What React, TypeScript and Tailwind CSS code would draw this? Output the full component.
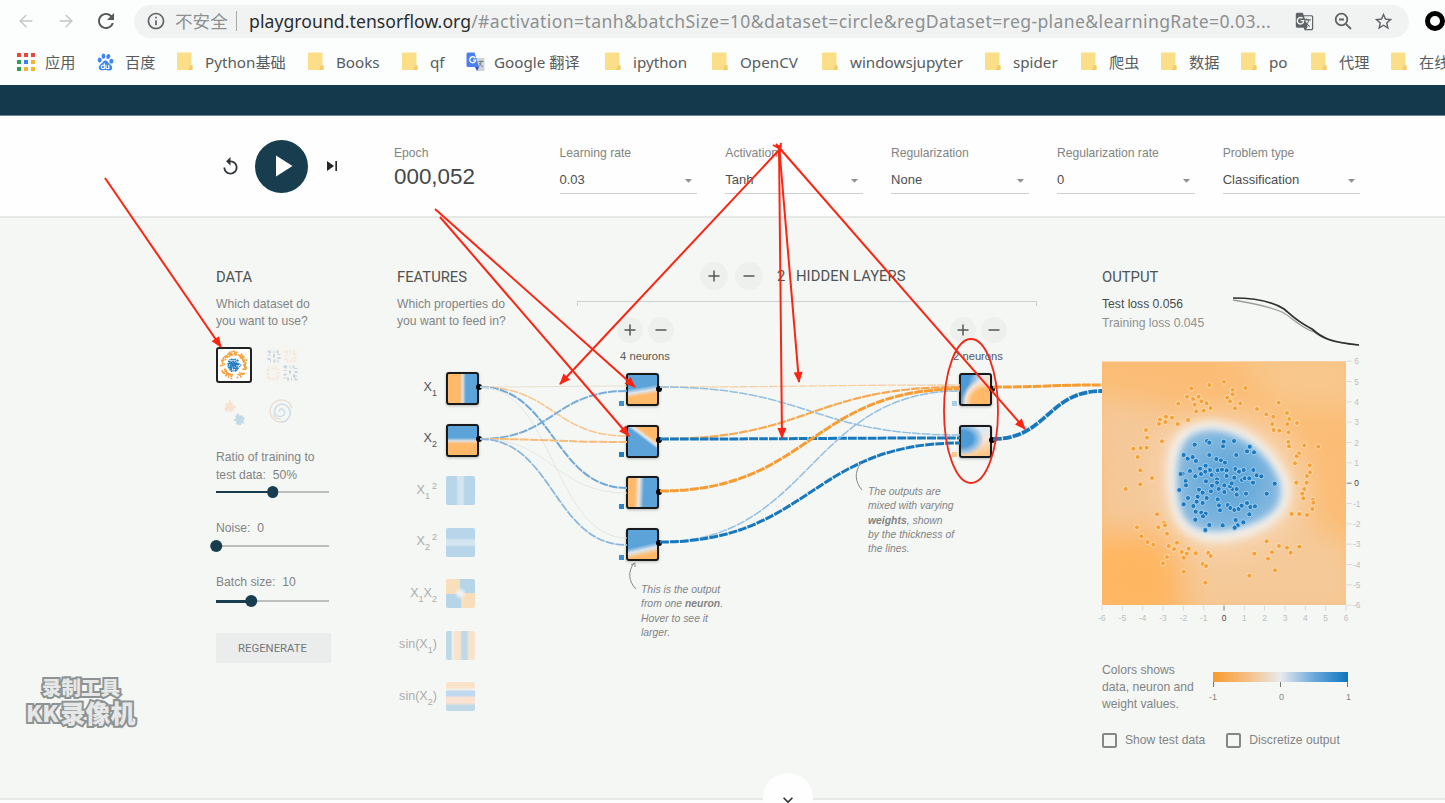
import { ArrowLeft, ArrowRight } from 'lucide-react';
import {
  MdArrowDropDown, MdGTranslate, MdInfoOutline, MdPlayArrow, MdRefresh,
  MdReplay, MdSkipNext, MdStarBorder, MdKeyboardArrowDown,
} from 'react-icons/md';
import { SiBaidu } from 'react-icons/si';

const bookmarks = [
  { label: '应用', icon: 'apps', width: 'w-[80px]' },
  { label: '百度', icon: 'baidu', width: 'w-[80px]' },
  { label: 'Python基础', icon: 'folder', width: 'w-[131px]' },
  { label: 'Books', icon: 'folder', width: 'w-[94px]' },
  { label: 'qf', icon: 'folder', width: 'w-[64px]' },
  { label: 'Google 翻译', icon: 'google', width: 'w-[139px]' },
  { label: 'ipython', icon: 'folder', width: 'w-[107px]' },
  { label: 'OpenCV', icon: 'folder', width: 'w-[110px]' },
  { label: 'windowsjupyter', icon: 'folder', width: 'w-[163px]' },
  { label: 'spider', icon: 'folder', width: 'w-[96px]' },
  { label: '爬虫', icon: 'folder', width: 'w-[80px]' },
  { label: '数据', icon: 'folder', width: 'w-[80px]' },
  { label: 'po', icon: 'folder', width: 'w-[70px]' },
  { label: '代理', icon: 'folder', width: 'w-[80px]' },
  { label: '在线', icon: 'folder', width: 'w-[80px]' },
];

const selects = [
  { label: 'Learning rate', value: '0.03' },
  { label: 'Activation', value: 'Tanh' },
  { label: 'Regularization', value: 'None' },
  { label: 'Regularization rate', value: '0' },
  { label: 'Problem type', value: 'Classification' },
];

const layerOne = [
  'bg-[linear-gradient(171deg,#ffb968_34%,#dfe6ec_46%,#5ba3d9_58%)]',
  'bg-[linear-gradient(37deg,#5ba3d9_55%,#e8e8e8_62%,#ffb968_69%)]',
  'bg-[linear-gradient(92deg,#ffb968_26%,#ece8e4_40%,#5ba3d9_54%)]',
  'bg-[linear-gradient(167deg,#5ba3d9_52%,#dfe6ec_64%,#ffb968_78%)]',
];
layerOne[0] = 'bg-[linear-gradient(171deg,#5ba3d9_43%,#dfe6ec_55%,#ffb968_66%)]';

const layerTwo = [
  'bg-[radial-gradient(ellipse_75%_75%_at_80%_90%,#ffb968_55%,#f6e3d3_80%,transparent_100%),linear-gradient(105deg,#4d9bd6_28%,#dfe7ee_55%,#f6e0cc_75%)]',
  'bg-[radial-gradient(ellipse_62%_48%_at_10%_42%,#4d9bd6_50%,#9cc3e4_80%,transparent_105%),linear-gradient(160deg,#dfe8ee_35%,#f3e6da_52%,#fcc486_85%)]',
];

const ORANGE = '#f79c33';
const BLUE = '#1878bd';

// from x,y -> to x,y
const links = [
  { a: [480, 387], b: [627, 386], color: '#e9dfcf', w: 1 },
  { a: [480, 387], b: [627, 436], color: '#f7c58d', w: 1.6 },
  { a: [480, 387], b: [627, 488], color: '#6fa9d8', w: 2 },
  { a: [480, 387], b: [627, 538], color: '#e5e6e3', w: 1 },
  { a: [480, 439], b: [627, 391], color: '#78add8', w: 2 },
  { a: [480, 439], b: [627, 442], color: '#f8bb78', w: 2 },
  { a: [480, 439], b: [627, 493], color: '#e5e7e4', w: 1 },
  { a: [480, 439], b: [627, 545], color: '#8bb8dc', w: 1.8 },
  { a: [660, 387], b: [960, 385], color: '#f6cfa2', w: 1.3 },
  { a: [660, 387], b: [960, 435], color: '#93bfe0', w: 1.5 },
  { a: [660, 439], b: [960, 387], color: '#f7a952', w: 2.2 },
  { a: [660, 439], b: [960, 438], color: BLUE, w: 3 },
  { a: [660, 491], b: [960, 389], color: ORANGE, w: 3 },
  { a: [660, 542], b: [960, 391], color: '#93bfe0', w: 1.5 },
  { a: [660, 542], b: [960, 443], color: BLUE, w: 3 },
  { a: [993, 387], b: [1102, 385], color: ORANGE, w: 3 },
  { a: [993, 439], b: [1102, 391], color: BLUE, w: 3.8 },
];

const arrows = [
  [105, 178, 221, 347],
  [435, 209, 635, 387],
  [440, 217, 629, 436],
  [780, 149, 560, 384],
  [779, 145, 782, 438],
  [779, 145, 799, 382],
  [776, 144, 1025, 429],
];

const orangeDots = [
  [402, 395], [358, 405], [304, 415], [428, 420], [466, 414], [428, 433], [291, 440], [309, 447], [326, 440], [334, 454],
  [350, 460], [314, 464], [265, 461], [412, 443], [420, 454], [451, 460], [435, 475], [362, 474], [319, 484], [341, 482],
  [501, 477], [566, 458], [529, 493], [550, 500], [591, 489], [598, 507], [547, 522], [592, 522], [621, 519], [551, 540],
  [568, 542], [596, 547], [595, 576], [597, 589], [643, 586], [685, 590], [627, 610], [620, 619], [615, 640], [659, 646],
  [660, 667], [651, 678], [650, 698], [619, 698], [643, 717], [637, 731], [640, 745], [669, 749], [670, 758], [667, 777],
  [651, 795], [628, 792], [605, 792], [294, 510], [246, 503], [228, 500], [210, 509], [226, 516], [207, 522], [263, 522],
  [168, 540], [171, 563], [216, 574], [130, 596], [152, 594], [170, 593], [143, 621], [151, 661], [186, 684], [151, 703],
  [107, 717], [201, 793], [141, 832], [205, 832], [222, 818], [225, 826], [231, 851], [154, 859], [173, 876], [190, 884],
  [236, 888], [261, 878], [252, 897], [275, 906], [296, 896], [290, 911], [281, 923], [317, 910], [231, 921], [219, 940],
  [281, 965], [355, 909], [362, 918], [338, 942], [348, 948], [346, 998], [493, 911], [530, 874], [567, 888], [591, 893],
  [602, 908], [628, 890], [546, 907], [534, 926], [555, 961], [478, 977],
];

const blueDots = [
  [314, 584], [351, 573], [358, 578], [401, 575], [399, 589], [432, 573], [479, 590], [471, 604], [492, 607], [439, 615],
  [281, 615], [293, 626], [308, 621], [318, 633], [358, 615], [379, 627], [393, 631], [405, 638], [347, 647], [330, 656],
  [300, 663], [278, 671], [272, 672], [287, 693], [288, 706], [268, 720], [316, 679], [333, 672], [346, 665], [360, 660],
  [365, 675], [383, 661], [396, 659], [410, 661], [410, 678], [436, 657], [448, 662], [461, 660], [490, 660], [433, 683],
  [456, 690], [464, 685], [478, 685], [500, 676], [514, 679], [489, 698], [554, 701], [530, 731], [468, 731], [440, 734],
  [427, 717], [440, 717], [420, 709], [403, 706], [381, 688], [381, 698], [366, 707], [348, 694], [327, 719], [338, 728],
  [363, 724], [386, 717], [403, 726], [323, 740], [350, 744], [383, 748], [294, 744], [281, 763], [310, 768], [320, 755],
  [338, 759], [387, 766], [390, 781], [413, 765], [421, 774], [433, 780], [446, 777], [455, 767], [471, 759], [481, 771],
  [495, 769], [478, 793], [317, 785], [334, 788], [347, 791], [339, 799], [316, 809], [358, 825], [346, 840], [398, 826],
  [437, 810], [460, 817], [443, 826], [434, 833], [447, 665], [425, 700],
];

function BookmarkIcon({ type }: { type: string }) {
  if (type === 'apps') {
    const colors = ['#e8453c', '#e8453c', '#e8453c', '#2e9e5b', '#3c7ff0', '#f5b32c', '#2e9e5b', '#f5b32c', '#f5b32c'];
    return (
      <div className="grid w-[18px] grid-cols-3 gap-[2.5px]">
        {colors.map((c, i) => <span key={i} className="h-[4.3px] w-[4.3px]" style={{ backgroundColor: c }} />)}
      </div>
    );
  }
  if (type === 'baidu') return <SiBaidu className="h-[18px] w-[17px] text-[#3b86f6]" />;
  if (type === 'google') {
    return (
      <svg width="20" height="20" viewBox="0 0 20 20">
        <path d="M8 6h10.500v13H11z" fill="#cfd3d8" />
        <path d="M0.500 2a1.500 1.500 0 0 1 1.500-1.500h6.500L13 15H2a1.500 1.500 0 0 1-1.500-1.500z" fill="#4a80ee" />
        <path d="M9 15h4l-2 4z" fill="#2b56c4" />
        <path d="M9.300 6.200a3 3 0 1 0 .4 2H7" fill="none" stroke="#fff" strokeWidth="1.300" />
        <path d="M12.500 9.500h5M15 8.500v1c0 2-1 4-2 5M13.500 11c1 2 2 3 3.500 4" fill="none" stroke="#777d85" />
      </svg>
    );
  }
  return (
    <svg width="16" height="19" viewBox="0 0 16 19">
      <path d="M0 1.500Q0 .5 1 .5h13.500v12.500h1v5H1q-1 0-1-1z" fill="#fbdf88" />
      <path d="M11 17.500c1-1 1.500-1.500 1.500-4h3v4.500H11z" fill="#f2cb6c" />
    </svg>
  );
}

function ZoomOutIcon() {
  return (
    <svg className="ml-[20px] shrink-0" width="19" height="19" viewBox="0 0 19 19" fill="none" stroke="#5f6265" strokeWidth="1.800">
      <circle cx="7.500" cy="7.500" r="5.800" />
      <path d="M11.800 11.800l5.200 5.200M5 7.500h5" />
    </svg>
  );
}

function Slider({ pct, thick = 'h-[2px]' }: { pct: number; thick?: string }) {
  return (
    <div className="relative flex h-4 w-[113px] items-center">
      <div className="h-[2px] w-full bg-[#bdbfbe]" />
      <div className={`absolute left-0 bg-[#183d4e] ${thick}`} style={{ width: `${pct}%` }} />
      <div className="absolute h-[11.5px] w-[11.5px] -translate-x-1/2 rounded-full bg-[#183d4e]" style={{ left: `${pct}%` }} />
    </div>
  );
}

function RoundButton({ sign, big = false }: { sign: string; big?: boolean }) {
  return (
    <button className={`flex items-center justify-center rounded-full bg-[#eef0ee] ${big ? 'h-7 w-7' : 'h-[26px] w-[26px]'}`}>
      <svg width="12" height="12" viewBox="0 0 12 12" stroke="#555758" strokeWidth="1.500">
        <path d={sign === '+' ? 'M0.500 6h11M6 .5v11' : 'M0.500 6h11'} />
      </svg>
    </button>
  );
}

function Node({ fill, bias }: { fill: string; bias?: string }) {
  return (
    <div className="relative flex h-[51.600px] items-center">
      <div className={`h-[33px] w-[33px] rounded-[3px] border-2 border-[#18191b] bg-origin-border shadow-[0_1px_3px_rgba(0,0,0,0.25)] ${fill}`} />
      <span className="absolute top-[21.500px] left-[30px] h-[6px] w-[6px] rounded-full bg-black" />
      {bias && <span className={`absolute bottom-[10px] -left-[7px] h-[5px] w-[5px] ${bias}`} />}
    </div>
  );
}

function Feature({ label, fill, active = false }: { label: React.ReactNode; fill: string; active?: boolean }) {
  return (
    <div className="flex h-[51.500px] items-center">
      <div className={`w-[40px] shrink-0 pb-[3px] text-right text-[12.600px] whitespace-nowrap ${active ? 'text-[#505253]' : 'text-[#abadac]'}`}>
        <span className="float-right">{label}</span>
      </div>
      <div className="ml-[9px]">
        {active
          ? <Node fill={fill} />
          : <div className={`mb-[2px] h-[29px] w-[29px] rounded-[2px] opacity-40 ${fill}`} />}
      </div>
    </div>
  );
}

const Sub = ({ children }: { children: React.ReactNode }) => <span className="relative top-[5px] text-[9px]">{children}</span>;
const Sup = ({ children }: { children: React.ReactNode }) => <span className="relative -top-[5px] ml-0.5 text-[9px]">{children}</span>;

function NeuronColumn({ count, fills, biases }: { count: number; fills: string[]; biases: string[] }) {
  return (
    <div className="flex w-[60px] flex-col items-center">
      <div className="flex gap-[5px]">
        <RoundButton sign="+" />
        <RoundButton sign="-" />
      </div>
      <p className="mt-[5px] h-4 text-[11.200px] leading-4 whitespace-nowrap text-[#555758]">{count} neurons</p>
      <div className="-ml-[5px]">
        {fills.map((f, i) => <Node key={i} fill={f} bias={biases[i]} />)}
      </div>
    </div>
  );
}

function Heatmap() {
  const ticks = [-6, -5, -4, -3, -2, -1, 0, 1, 2, 3, 4, 5, 6];
  return (
    <svg className="absolute top-[138px] left-[1090px]" width="276" height="270" viewBox="0 318 828 810">
      <defs>
        <clipPath id="plot"><rect x="36" y="334" width="732" height="731" /></clipPath>
        <filter id="soft" x="-30%" y="-30%" width="160%" height="160%"><feGaussianBlur stdDeviation="40" /></filter>
        <filter id="halo" x="-20%" y="-20%" width="140%" height="140%"><feGaussianBlur stdDeviation="14" /></filter>
        <filter id="edge" x="-20%" y="-20%" width="140%" height="140%"><feGaussianBlur stdDeviation="11" /></filter>
        <radialGradient id="core">
          <stop offset="0.300" stopColor="#63a8d9" />
          <stop offset="1" stopColor="#86b9e0" />
        </radialGradient>
      </defs>
      <g clipPath="url(#plot)">
        <rect x="36" y="334" width="732" height="731" fill="#fbbd76" />
        <g filter="url(#soft)">
          <path d="M430 300H800V480L560 460z" fill="#f8c78c" />
          <path d="M0 430L250 480 230 830 20 840z" fill="#f5c898" />
          <path d="M290 860L600 780 800 900V1100H300z" fill="#f5c998" />
          <path d="M0 870H230L270 1100H0z" fill="#ffb661" />
          <path d="M200 560Q300 450 480 500T660 780Q500 960 330 920T200 560" fill="#f6d2ab" />
        </g>
        <path d="M232 640C238 540 300 512 370 512C470 520 560 590 598 690C620 780 560 830 470 862C370 895 280 875 250 800C232 740 228 700 232 640Z" fill="#f3f0ec" filter="url(#halo)" />
        <path d="M262 650C270 560 310 541 370 541C450 545 535 610 567 690C590 765 545 804 460 830C370 855 300 848 274 785C260 740 258 700 262 650Z" fill="url(#core)" filter="url(#edge)" />
        {orangeDots.map(([x, y], i) => <circle key={i} cx={x} cy={y} r="7.500" fill="#f5a136" stroke="#fde3c2" strokeWidth="2.500" />)}
        {blueDots.map(([x, y], i) => <circle key={i} cx={x} cy={y} r="7.500" fill="#1a79bf" stroke="#b3d7f0" strokeWidth="2.500" />)}
      </g>
      {ticks.map(t => {
        const x = 402 + t * 61;
        const y = 699.5 - t * 61;
        const color = t === 0 ? '#444' : '#bcbebd';
        return (
          <g key={t} fill={color} stroke="none" fontSize="25" fontFamily="Liberation Sans, sans-serif" textAnchor="middle">
            <path d={`M${x} 1067v15M770 ${y}h15`} stroke={t === 0 ? '#777' : '#d8dad9'} strokeWidth="3" />
            <text x={x} y="1112">{t}</text>
            <text x="800" y={y + 9}>{t}</text>
          </g>
        );
      })}
    </svg>
  );
}

function Arrow({ p }: { p: number[] }) {
  const [x1, y1, x2, y2] = p;
  const deg = (Math.atan2(y2 - y1, x2 - x1) * 180) / Math.PI;
  return (
    <g>
      <line x1={x1} y1={y1} x2={x2} y2={y2} stroke="#fb2512" strokeWidth="2" />
      <path d="M1 0L-10 4.500V-4.500Z" fill="#fb2512" transform={`translate(${x2} ${y2}) rotate(${deg})`} />
    </g>
  );
}

function Checkbox({ label }: { label: string }) {
  return (
    <label className="flex items-center gap-2">
      <span className="h-[15px] w-[15px] rounded-[2px] border-2 border-[#858787]" />
      {label}
    </label>
  );
}

export default function App() {
  return (
    <div className="relative h-[803px] w-[1445px] overflow-hidden bg-[#fcfdfc] font-['Liberation_Sans',Arial,sans-serif] text-[12.150px] text-[#828484]">
      <div className="bg-[#fcfefd] font-['Noto_Sans','Noto_Sans_CJK_SC',sans-serif]">
        <div className="flex h-[42px] items-center pl-[16px]">
          <ArrowLeft className="h-5 w-5 text-[#c4c6c6]" strokeWidth={1.6} />
          <ArrowRight className="ml-5 h-5 w-5 text-[#c4c6c6]" strokeWidth={1.6} />
          <MdRefresh className="ml-[18px] h-6 w-6 text-[#57595b]" />
          <div className="ml-[16px] flex h-[33px] w-[1275px] shrink-0 items-center rounded-full bg-[#f1f3f3] pl-[12px] text-[17.600px] text-[#8d9091]">
            <MdInfoOutline className="h-[20px] w-[20px] text-[#606366]" />
            <span className="ml-[9px] w-[53px] whitespace-nowrap">不安全</span>
            <span className="ml-[8px] h-5 w-px bg-[#a5a8a9]" />
            <span className="ml-[12px] w-[1036px] tracking-[0.380px] whitespace-nowrap">
              <span className="tracking-[0.060px] text-[#292c2e]">playground.tensorflow.org</span>/#activation=tanh&amp;batchSize=10&amp;dataset=circle&amp;regDataset=reg-plane&amp;learningRate=0.03...
            </span>
            <MdGTranslate className="ml-[10px] h-[19px] w-[19px] text-[#5f6265]" />
            <ZoomOutIcon />
            <MdStarBorder className="ml-[20px] h-[21px] w-[21px] text-[#5f6265]" />
          </div>
          <span className="ml-[16px] h-5 w-5 shrink-0 rounded-full border-[5px] border-black" />
        </div>
        <div className="flex h-[43px] items-center pl-[17px] text-[15.200px] text-[#585b5e]">
          {bookmarks.map((b, i) => (
            <div key={i} className={`flex shrink-0 items-center pb-[3px] ${b.width}`}>
              <span className="flex w-[28px] shrink-0 items-center"><BookmarkIcon type={b.icon} /></span>
              <span className="whitespace-nowrap">{b.label}</span>
            </div>
          ))}
        </div>
      </div>

      <header className="h-[31px] border-b border-[#6d8590] bg-[#15394c]" />

      <section className="relative flex h-[102px] border-b-2 border-[#e6e8e7] bg-[#fdfefd] pl-[220px]">
        <div className="flex h-full w-[174px] items-center">
          <MdReplay className="h-[21px] w-[21px] text-[#2f3335]" />
          <div className="ml-[14px] flex h-[53px] w-[53px] items-center justify-center rounded-full bg-[#183d4e]">
            <MdPlayArrow className="h-9 w-9 text-white" />
          </div>
          <MdSkipNext className="ml-[14px] h-[20px] w-[20px] text-[#222628]" />
        </div>
        <div className="w-[165.500px] pt-[29px]">
          <p className="h-4 leading-4">Epoch</p>
          <p className="text-[22.400px] leading-8 text-[#444748]">000,052</p>
        </div>
        <div className="flex gap-[28px] pt-[29px]">
          {selects.map(s => (
            <div key={s.label} className="w-[137.800px]">
              <p className="h-4 leading-4">{s.label}</p>
              <div className="mt-[5px] flex h-[28px] items-center justify-between border-b border-[#cfd1d0] text-[13px] text-[#4c4f50]">
                {s.value}
                <MdArrowDropDown className="mt-0.5 h-[17px] w-[17px] text-[#8f9191]" />
              </div>
            </div>
          ))}
        </div>
      </section>

      <main className="relative flex h-[582px] border-b-2 border-[#e8eae9] bg-[#f5f7f5] pl-[216px]">
        <div className="w-[115px] shrink-0 pt-[49px]">
          <h2 className="font-[Roboto] text-[14.800px] leading-5 text-[#505354]">DATA</h2>
          <p className="mt-[9px] leading-[17px]">Which dataset do<br />you want to use?</p>
          <div className="mt-[17px] grid grid-cols-[36px_36px] gap-x-3 gap-y-[10px]">
            <svg className="rounded-[3px] border-2 border-[#222] bg-white" width="36" height="36" viewBox="46 344 712 711">
              {orangeDots.map(([x, y], i) => <circle key={i} cx={x} cy={y} r="21" fill="#f5a13c" />)}
              {blueDots.map(([x, y], i) => <circle key={i} cx={x} cy={y} r="17" fill="#1a79bf" />)}
            </svg>
            <svg width="36" height="36" viewBox="0 0 36 36" className="opacity-35">
              <rect width="36" height="36" fill="#f5f2ef" />
              <path d="M5 5h10v9H5zM21 20h11v12H21z" fill="none" stroke="#7c9dc0" strokeWidth="3" strokeDasharray="2 2.500 1 2" />
              <path d="M9 9h3M25 25h3M29 29h2" stroke="#5d89b7" strokeWidth="3" strokeDasharray="2 1" />
              <path d="M4 21h10v11H4zM22 5h9v9h-9z" fill="none" stroke="#f7d2b4" strokeWidth="3" strokeDasharray="2 1.500" />
            </svg>
            <svg width="36" height="36" viewBox="0 0 36 36" className="opacity-45">
              <path d="M10 12l4-4 3 4 2 2-4 5-3-2-3 1z" fill="#f9c9a0" stroke="#f9c9a0" strokeWidth="2" strokeDasharray="2 2" />
              <path d="M21 21l4 2 3 1-1 6-5 2-3-5z" fill="#88b9d6" stroke="#88b9d6" strokeWidth="2" strokeDasharray="2 2" />
            </svg>
            <svg width="36" height="36" viewBox="0 0 36 36" className="opacity-35" fill="none" strokeWidth="1.500">
              <path d="M15 19a2.500 2.500 0 0 1 3-3a4 4 0 0 1 2 6a6 6 0 0 1-9-1a7.500 7.500 0 0 1 7-10a9 9 0 0 1 8 11a10 10 0 0 1-9 7" stroke="#8fa9cd" />
              <path d="M17 29a11 11 0 0 1-11-11a11.500 11.500 0 0 1 12-11a11 11 0 0 1 10 8M9 21a8 8 0 0 0 8 5" stroke="#d9b193" />
            </svg>
          </div>
          <p className="mt-[19px] leading-[18px]">Ratio of training to<br />test data:&nbsp; 50%</p>
          <Slider pct={50} />
          <p className="mt-[19px] leading-[18px]">Noise:&nbsp; 0</p>
          <div className="mt-px"><Slider pct={0} /></div>
          <p className="mt-[19px] leading-[18px]">Batch size:&nbsp; 10</p>
          <div className="mt-[2px]"><Slider pct={31} thick="h-[3px]" /></div>
          <button className="mt-6 h-[30px] w-[115px] bg-[#ebedec] pt-0.5 pr-0.5 font-[Roboto] text-[11.300px] text-[#737677]">REGENERATE</button>
        </div>

        <div className="ml-[66px] w-[115px] shrink-0 pt-[49px]">
          <h2 className="font-[Roboto] text-[14.800px] leading-5 text-[#505354]">FEATURES</h2>
          <p className="mt-[9px] leading-[17px] whitespace-nowrap">Which properties do<br />you want to feed in?</p>
          <div className="mt-[33px]">
            <Feature active label={<>X<Sub>1</Sub></>} fill="bg-[linear-gradient(90deg,#ffb968_42%,#dfe1e2_51%,#5ba3d9_60%)]" />
            <Feature active label={<>X<Sub>2</Sub></>} fill="bg-[linear-gradient(180deg,#5ba3d9_42%,#dfe1e2_51%,#ffb968_60%)]" />
            <Feature label={<>X<Sub>1</Sub><Sup>2</Sup></>} fill="bg-[linear-gradient(90deg,#5ba3d9_35%,#a5cbe8_42%,#a5cbe8_58%,#5ba3d9_65%)]" />
            <Feature label={<>X<Sub>2</Sub><Sup>2</Sup></>} fill="bg-[linear-gradient(180deg,#5ba3d9_35%,#a5cbe8_42%,#a5cbe8_58%,#5ba3d9_65%)]" />
            <Feature label={<>X<Sub>1</Sub>X<Sub>2</Sub></>} fill="bg-[radial-gradient(circle,#e8ecee_8%,transparent_30%),conic-gradient(#5ba3d9_25%,#ffb968_25%_50%,#5ba3d9_50%_75%,#ffb968_75%)]" />
            <Feature label={<>sin(X<Sub>1</Sub>)</>} fill="bg-[linear-gradient(90deg,#6dabd3_16%,#f0ebe4_24%,#ffc88c_30%_48%,#6dabd3_56%_70%,#ffc88c_80%)]" />
            <Feature label={<>sin(X<Sub>2</Sub>)</>} fill="bg-[linear-gradient(180deg,#ffc88c_20%,#f0ebe4_26%,#6dabe8_32%_46%,#ffc39a_54%_72%,#6dabd3_82%)]" />
          </div>
        </div>

        <div className="ml-[65px] w-[460px] shrink-0 pt-[44px]">
          <div className="flex h-7 items-center pl-[123px] font-[Roboto] text-[14.800px] text-[#505354]">
            <RoundButton big sign="+" />
            <span className="ml-[7px]"><RoundButton big sign="-" /></span>
            <span className="ml-[14px] w-[19px]">2</span>
            <h2 className="tracking-[0.050px] whitespace-nowrap">HIDDEN LAYERS</h2>
          </div>
          <div className="mt-[11px] h-[5px] border border-b-0 border-[#ced0cf]" />
          <div className="mt-[11px] flex justify-between pr-[29px] pl-[38px]">
            <NeuronColumn count={4} fills={layerOne} biases={['bg-[#3c8fd0]', 'bg-[#1f7cc4]', 'bg-[#2b84c9]', 'bg-[#3c8fd0]']} />
            <NeuronColumn count={2} fills={layerTwo} biases={['bg-[#a9cfe6]', 'bg-[#f3cb92]']} />
          </div>
        </div>

        <div className="ml-[65px] w-[270px] shrink-0 pt-[49px]">
          <h2 className="font-[Roboto] text-[14.800px] leading-5 text-[#505354]">OUTPUT</h2>
          <div className="flex h-[58px] justify-between pt-[8px] pr-[12px]">
            <div className="leading-[18.500px] text-[#909292]">
              <p className="text-[#484b4c]">Test loss 0.056</p>
              <p>Training loss 0.045</p>
            </div>
            <svg width="128" height="52" viewBox="0 0 128 52" fill="none">
              <path d="M1 5C20 8 38 12 50 17C60 22 66 31 82 37C94 46 105 48 127 50" stroke="#9a9c9b" strokeWidth="1.300" />
              <path d="M1 3C20 3 38 5 52 14C58 19 64 26 80 34C90 43 98 47 127 50" stroke="#2d2f30" strokeWidth="1.700" />
            </svg>
          </div>
          <div className="mt-[317px] flex">
            <p className="w-[110px] leading-[17px]">Colors shows<br />data, neuron and<br />weight values.</p>
            <div className="w-[138px] pt-[10px]">
              <div className="ml-px h-[10px] w-[135px] bg-[linear-gradient(90deg,#f79a2b,#f6be83_25%,#e8eaec_50%,#6aa9dc_75%,#0d74bd)]" />
              <div className="flex h-[5px] w-[137px] justify-between px-px">
                <span className="w-px bg-[#777]" /><span className="w-px bg-[#777]" /><span className="w-px bg-[#777]" />
              </div>
              <div className="-ml-[3px] flex w-[142px] justify-between text-[9px] leading-[20px]">
                <span>-1</span><span>0</span><span>1</span>
              </div>
            </div>
          </div>
          <div className="mt-[18px] flex gap-[21px] whitespace-nowrap">
            <Checkbox label="Show test data" />
            <Checkbox label="Discretize output" />
          </div>
        </div>

        <svg className="pointer-events-none absolute top-0 left-0" width="1445" height="580" viewBox="0 218 1445 580" fill="none">
          {links.map(({ a, b, color, w }, i) => {
            const mid = (a[0] + b[0]) / 2;
            return (
              <path key={i} d={`M${a[0]} ${a[1]}C${mid} ${a[1]} ${mid} ${b[1]} ${b[0]} ${b[1]}`}
                stroke={color} strokeWidth={w} strokeDasharray={w > 1 ? '8.800 1.100' : undefined} />
            );
          })}
          <path d="M636 589C628 581 628 571 634 563M631 565l4-2v4" stroke="#858786" />
          <path d="M862 490C855 482 854 472 861 463" stroke="#858786" />
        </svg>
        <Heatmap />

        <p className="absolute top-[365px] left-[641px] w-[90px] text-[10.400px] leading-[14.300px] whitespace-nowrap italic">
          This is the output<br />from one <b>neuron</b>.<br />Hover to see it<br />larger.
        </p>
        <p className="absolute top-[267px] left-[868px] w-[90px] text-[10.400px] leading-[14.300px] whitespace-nowrap italic">
          The outputs are<br />mixed with varying<br /><b>weights</b>, shown<br />by the thickness of<br />the lines.
        </p>
      </main>

      <div className="absolute top-[773px] left-[763px] flex h-[50px] w-[50px] justify-center rounded-full bg-[#fdfefd] pt-[17px]">
        <MdKeyboardArrowDown className="h-5 w-5 text-[#333]" />
      </div>

      <div className="absolute top-[675px] left-[26px] w-[120px] font-['Noto_Sans_CJK_SC',sans-serif] font-black whitespace-nowrap text-[#e6e8e8] [-webkit-text-stroke:4px_#8d9392] [paint-order:stroke_fill]">
        <p className="pl-[16px] text-[19.500px] leading-[24px]">录制工具</p>
        <p className="flex items-center text-[25px] leading-[26px]"><span className="mr-[2px] text-[23px]">KK</span>录像机</p>
      </div>

      {/* screen annotations */}
      <svg className="pointer-events-none absolute top-0 left-0" width="1445" height="803" fill="none">
        {arrows.map((p, i) => <Arrow key={i} p={p} />)}
        <path d="M773 145l9 5M781 143l-2 14" stroke="#fb2512" strokeWidth="2" />
        <ellipse cx="971" cy="411" rx="27" ry="72" stroke="#f0281a" strokeWidth="1.800" />
      </svg>
    </div>
  );
}
